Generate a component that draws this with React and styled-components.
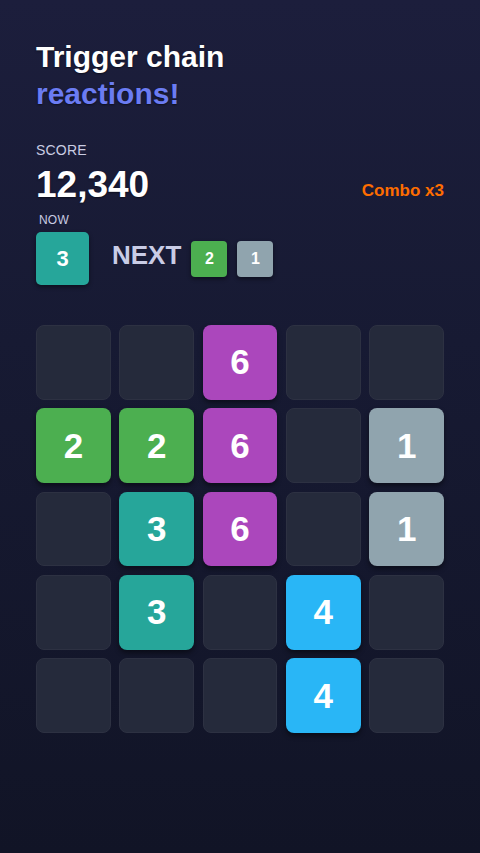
import React from "react";
import styled, { createGlobalStyle } from "styled-components";

const Global = createGlobalStyle`
  html, body { margin: 0; padding: 0; }
  body {
    background: #121426;
    font-family: "Liberation Sans", Arial, sans-serif;
  }
`;

const Screen = styled.div`
  width: 480px;
  height: 853px;
  box-sizing: border-box;
  padding: 38px 36px 0 36px;
  background: linear-gradient(180deg, #1c1e3c 0%, #171a33 40%, #111426 100%);
  display: flex;
  flex-direction: column;
  overflow: hidden;
`;

const Title = styled.h1`
  margin: 0;
  font-size: 30px;
  line-height: 37px;
  font-weight: 700;
  color: #ffffff;
  text-shadow: 0 1px 2px rgba(0, 0, 0, 0.5);
`;

const Accent = styled.span`
  display: block;
  color: #6b7cf2;
`;

const ScoreRow = styled.div`
  margin-top: 30px;
  display: flex;
  align-items: flex-end;
  justify-content: space-between;
`;

const ScoreBlock = styled.div`
  display: flex;
  flex-direction: column;
`;

const Label = styled.div`
  font-size: ${(p) => p.$size || 14}px;
  color: #c9cce3;
  letter-spacing: 0.2px;
  padding-left: ${(p) => p.$indent || 0}px;
`;

const Score = styled.div`
  margin-top: 7px;
  font-size: 37px;
  line-height: 40px;
  font-weight: 700;
  color: #ffffff;
  text-shadow: 0 1px 2px rgba(0, 0, 0, 0.5);
`;

const Combo = styled.div`
  font-size: 17px;
  font-weight: 700;
  color: #ff6d00;
  margin-bottom: 4px;
`;

const NowSection = styled.div`
  margin-top: 8px;
  display: flex;
  flex-direction: column;
  gap: 5px;
`;

const PieceRow = styled.div`
  display: flex;
  align-items: center;
`;

const Piece = styled.div`
  width: ${(p) => p.$size}px;
  height: ${(p) => p.$size}px;
  border-radius: ${(p) => (p.$size > 40 ? 5 : 4)}px;
  background: ${(p) => p.$color};
  color: #fff;
  font-weight: 700;
  font-size: ${(p) => (p.$size > 40 ? 22 : 16)}px;
  display: flex;
  align-items: center;
  justify-content: center;
  box-shadow: 0 2px 4px rgba(0, 0, 0, 0.45);
  flex-shrink: 0;
`;

const NextLabel = styled.div`
  margin-left: 23px;
  margin-right: 10px;
  font-size: 26px;
  font-weight: 700;
  color: #c9cce6;
  margin-top: -6px;
`;

const NextPieces = styled.div`
  display: flex;
  gap: 10px;
`;

const Board = styled.div`
  margin-top: 40px;
  display: grid;
  grid-template-columns: repeat(5, 1fr);
  gap: 8.5px;
`;

const Cell = styled.div`
  aspect-ratio: 1;
  border-radius: 8px;
  box-sizing: border-box;
  display: flex;
  align-items: center;
  justify-content: center;
  font-size: 35px;
  font-weight: 700;
  color: #ffffff;
  background: ${(p) => p.$color || "#252a3b"};
  border: 1px solid ${(p) => (p.$color ? "transparent" : "#2d3142")};
  box-shadow: ${(p) => (p.$color ? "0 3px 5px rgba(0,0,0,0.45)" : "none")};
`;

const COLORS = {
  1: "#90a4ae",
  2: "#4caf50",
  3: "#26a69a",
  4: "#29b6f6",
  6: "#ab47bc",
};

const BOARD = [
  [0, 0, 6, 0, 0],
  [2, 2, 6, 0, 1],
  [0, 3, 6, 0, 1],
  [0, 3, 0, 4, 0],
  [0, 0, 0, 4, 0],
];

export default function App() {
  return (
    <>
      <Global />
      <Screen>
        <Title>
          Trigger chain
          <Accent>reactions!</Accent>
        </Title>
        <ScoreRow>
          <ScoreBlock>
            <Label>SCORE</Label>
            <Score>12,340</Score>
          </ScoreBlock>
          <Combo>Combo x3</Combo>
        </ScoreRow>
        <NowSection>
          <Label $size={12} $indent={3}>NOW</Label>
          <PieceRow>
            <Piece $size={53} $color={COLORS[3]}>3</Piece>
            <NextLabel>NEXT</NextLabel>
            <NextPieces>
              <Piece $size={36} $color={COLORS[2]}>2</Piece>
              <Piece $size={36} $color={COLORS[1]}>1</Piece>
            </NextPieces>
          </PieceRow>
        </NowSection>
        <Board>
          {BOARD.flat().map((v, i) => (
            <Cell key={i} $color={v ? COLORS[v] : null}>
              {v ? v : ""}
            </Cell>
          ))}
        </Board>
      </Screen>
    </>
  );
}
